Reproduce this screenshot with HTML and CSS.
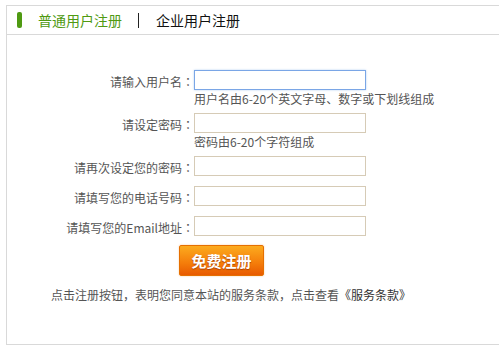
FILE: index.html
```html
<!DOCTYPE html>
<html lang="zh-CN">
<head>
  <meta charset="UTF-8">
  <meta name="viewport" content="width=device-width, initial-scale=1.0">
  <title>用户注册</title>
  <link rel="stylesheet" href="styles.css">
</head>
<body>
  <div class="reg-box">
    <div class="reg-tabs">
      <span class="tab-mark"></span>
      <span class="tab active">普通用户注册</span>
      <span class="tab-sep"></span>
      <span class="tab">企业用户注册</span>
    </div>
    <form class="reg-form">
      <div class="row with-hint">
        <label for="username">请输入用户名<span class="colon">：</span></label>
        <div class="field">
          <input type="text" id="username" class="focus">
          <p class="hint">用户名由6-20个英文字母、数字或下划线组成</p>
        </div>
      </div>
      <div class="row with-hint">
        <label for="pwd">请设定密码<span class="colon">：</span></label>
        <div class="field">
          <input type="password" id="pwd">
          <p class="hint">密码由6-20个字符组成</p>
        </div>
      </div>
      <div class="row">
        <label for="pwd2">请再次设定您的密码<span class="colon">：</span></label>
        <div class="field"><input type="password" id="pwd2"></div>
      </div>
      <div class="row">
        <label for="phone">请填写您的电话号码<span class="colon">：</span></label>
        <div class="field"><input type="text" id="phone"></div>
      </div>
      <div class="row">
        <label for="email">请填写您的Email地址<span class="colon">：</span></label>
        <div class="field"><input type="text" id="email"></div>
      </div>
      <button type="button" class="reg-btn">免费注册</button>
      <p class="terms">点击注册按钮<span class="comma">，</span>表明您同意本站的服务条款<span class="comma">，</span>点击查看<a href="#">《服务条款》</a></p>
    </form>
  </div>
</body>
</html>
```

FILE: styles.css
```css
body {
  margin: 0;
  padding: 0;
  font-family: "Noto Sans CJK SC", "Noto Sans", sans-serif;
  font-size: 12px;
  color: #555;
  background: #fff;
}

.reg-box {
  margin: 5px 0 0 6px;
  width: 492px;
  height: 338px;
  border: 1px solid #d9d9d9;
  border-right: none;
}

.reg-tabs {
  display: flex;
  align-items: center;
  height: 28px;
  border-bottom: 1px solid #d9d9d9;
  font-size: 14px;
  color: #111;
}

.tab-mark {
  width: 5px;
  height: 16px;
  margin: 0 16px 0 10px;
  background: #4f9a12;
  border-radius: 2px;
}

.tab.active {
  color: #4f9a12;
}

.tab-sep {
  width: 1px;
  height: 15px;
  margin: 0 17px 0 16px;
  background: #222;
}

.reg-form {
  padding-top: 35px;
}

.row {
  display: flex;
  margin-bottom: 10px;
}

.row.with-hint {
  margin-bottom: 7px;
}

.row label {
  box-sizing: border-box;
  width: 187px;
  height: 20px;
  padding-top: 3px;
  text-align: right;
  line-height: 17px;
  color: #555;
}

/* centred full-width punctuation, as in the original */
.colon {
  display: inline-block;
  width: 12px;
  text-align: center;
  font-family: "Noto Sans CJK TC", sans-serif;
}

.comma {
  display: inline-block;
  width: 12px;
}

.field input {
  display: block;
  box-sizing: border-box;
  width: 172px;
  height: 20px;
  margin: 0;
  padding: 0 3px;
  border: 1px solid #d6cbb6;
  background: #fff;
  outline: none;
}

.field input.focus {
  border-color: #7aa6e6;
  box-shadow: 0 0 2px #b5cff2;
}

.hint {
  margin: 2px 0 0;
  line-height: 14px;
  color: #555;
}

.reg-btn {
  display: block;
  width: 85px;
  height: 31px;
  margin: -1px 0 0 172px;
  border: 1px solid #e56f00;
  border-radius: 2px;
  background: linear-gradient(#fcab1e, #f47c0a 60%, #e85a00);
  box-shadow: 0 0 2px #f8c89a;
  color: #fff;
  font-family: "Noto Sans CJK SC", sans-serif;
  font-size: 15px;
  font-weight: bold;
  text-shadow: 0 1px 1px #a84000;
  cursor: pointer;
}

.terms {
  margin: 11px 0 0 44px;
  line-height: 16px;
  color: #555;
}

.terms a {
  color: #333;
  text-decoration: none;
}
```
